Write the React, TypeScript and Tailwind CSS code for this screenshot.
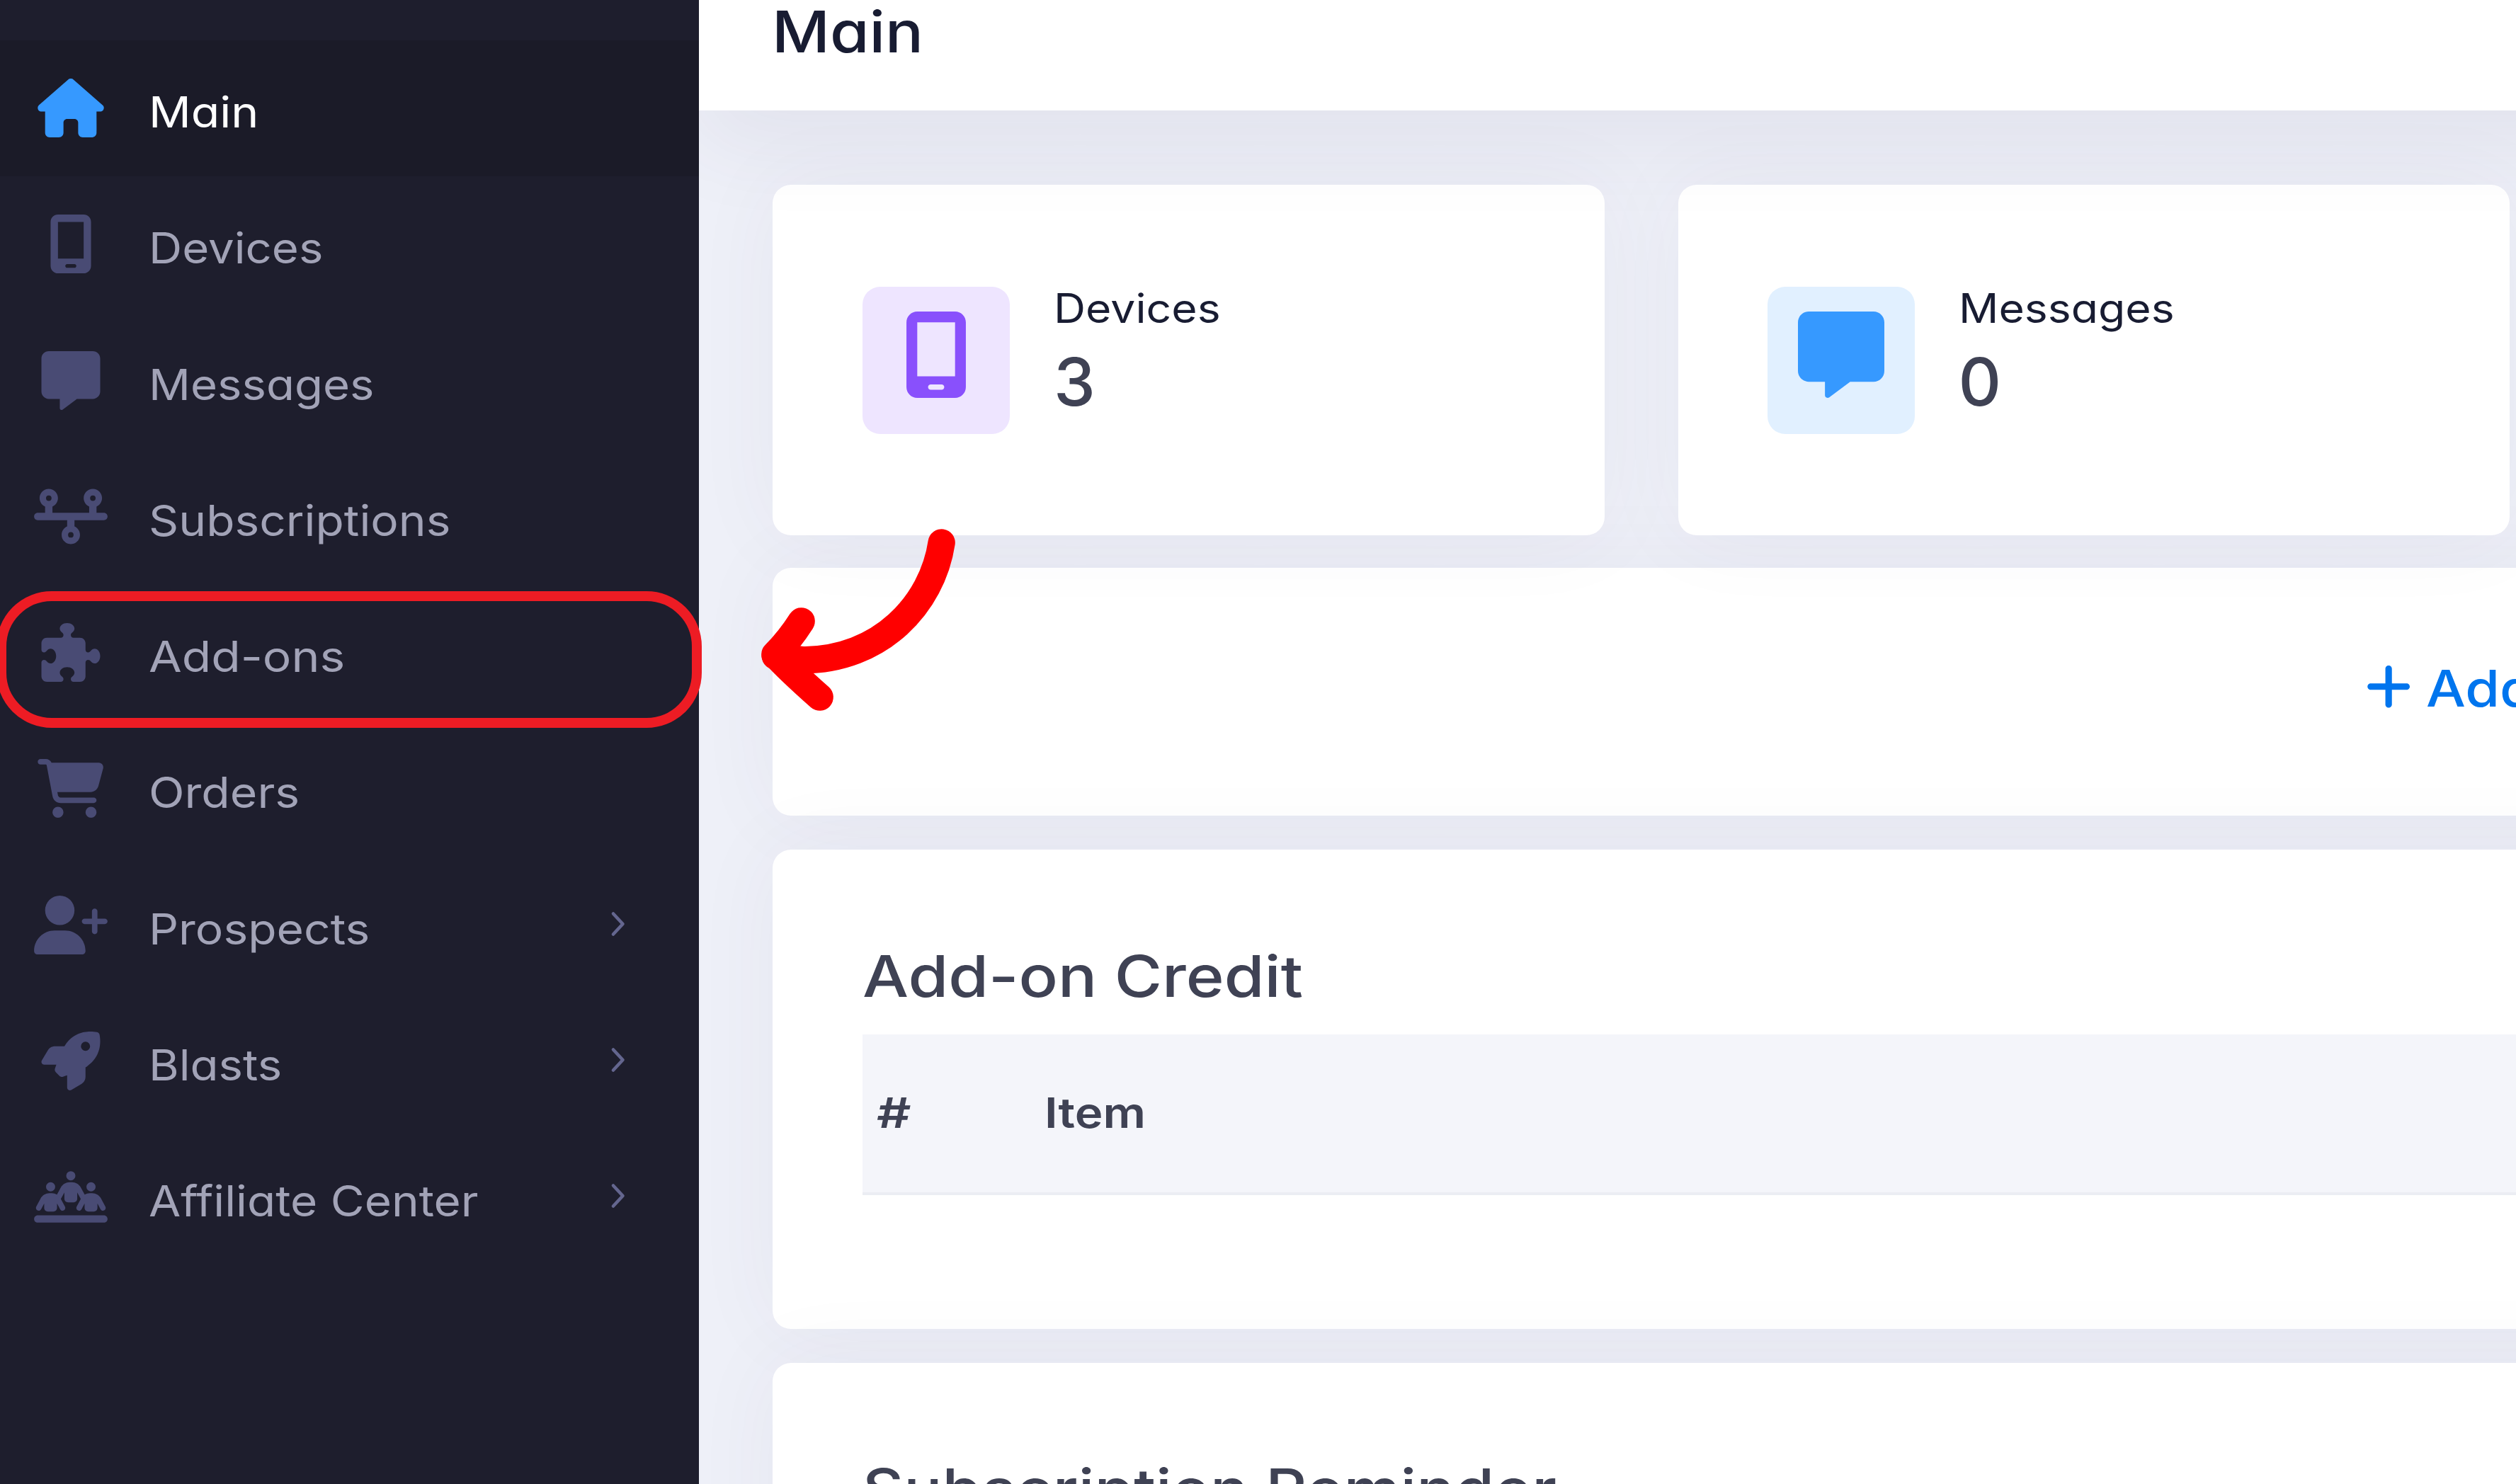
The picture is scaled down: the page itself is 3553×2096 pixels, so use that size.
import React from 'react';
import type { IconType } from 'react-icons';
import {
  FaCartShopping,
  FaHouse,
  FaMessage,
  FaMobileScreen,
  FaPeopleLine,
  FaPlus,
  FaPuzzlePiece,
  FaRocket,
  FaTimeline,
  FaUserPlus,
} from 'react-icons/fa6';
import clsx from 'clsx';

interface NavItem {
  label: string;
  icon: IconType;
  stretch: string;
  active?: boolean;
  hasChildren?: boolean;
}

const navItems: NavItem[] = [
  { label: 'Main', icon: FaHouse, stretch: 'scale-x-[1.103]', active: true },
  { label: 'Devices', icon: FaMobileScreen, stretch: 'scale-x-[1.089]' },
  { label: 'Messages', icon: FaMessage, stretch: 'scale-x-[1.088]' },
  { label: 'Subscriptions', icon: FaTimeline, stretch: 'scale-x-[1.097]' },
  { label: 'Add-ons', icon: FaPuzzlePiece, stretch: 'scale-x-[1.129]' },
  { label: 'Orders', icon: FaCartShopping, stretch: 'scale-x-[1.102]' },
  { label: 'Prospects', icon: FaUserPlus, stretch: 'scale-x-[1.099]', hasChildren: true },
  { label: 'Blasts', icon: FaRocket, stretch: 'scale-x-[1.089]', hasChildren: true },
  { label: 'Affiliate Center', icon: FaPeopleLine, stretch: 'scale-x-[1.094]', hasChildren: true },
];

const Chevron: React.FC = () => (
  <svg viewBox="0 0 22 38" className="mr-[103px] mb-[3px] ml-auto h-[38px] w-[22px]" fill="none">
    <path
      d="M4 4.5 L17.5 19 L4 33.5"
      stroke="#64668f"
      strokeWidth="4.6"
      strokeLinecap="round"
      strokeLinejoin="round"
    />
  </svg>
);

const Sidebar: React.FC = () => (
  <aside className="h-full w-[987px] shrink-0 bg-[#1e1e2d] pt-[56.5px]">
    <nav>
      {navItems.map(({ label, icon: Icon, stretch, active, hasChildren }) => (
        <a
          key={label}
          className={clsx('flex h-[192.25px] items-center', active && 'bg-[#1b1b28]')}
        >
          <Icon
            className={clsx(
              'ml-12 h-[83px] w-[104px] shrink-0',
              active ? 'text-[#3699ff]' : 'text-[#494b74]',
            )}
          />
          <span
            className={clsx(
              'ml-[58px] origin-left pt-[11px] text-[60px] whitespace-nowrap',
              stretch,
              active ? 'text-white' : 'text-[#a2a3b7]',
            )}
          >
            {label}
          </span>
          {hasChildren && <Chevron />}
        </a>
      ))}
    </nav>
  </aside>
);

interface StatCardProps {
  label: string;
  value: number;
  icon: IconType;
  tileClass: string;
  className: string;
}

const StatCard: React.FC<StatCardProps> = ({ label, value, icon: Icon, tileClass, className }) => (
  <div
    className={clsx(
      'flex h-[495px] w-[1174.5px] shrink-0 items-center rounded-[26px] bg-white shadow-[0_0_125px_0_rgba(82,63,105,0.05)]',
      className,
    )}
  >
    <div
      className={clsx(
        'flex size-[208px] items-center justify-center rounded-[25px] pb-[15px]',
        tileClass,
      )}
    >
      <Icon className="size-[122px]" />
    </div>
    <div className="ml-[62px] pb-[37px]">
      <div className="origin-left scale-x-[1.096] text-[57px] leading-[84px] text-[#181c32]">
        {label}
      </div>
      <div className="mt-[13px] text-[94px] leading-[96px] font-medium text-[#3f4254]">{value}</div>
    </div>
  </div>
);

const Card: React.FC<{ className?: string; children: React.ReactNode }> = ({
  className,
  children,
}) => (
  <section
    className={clsx(
      'w-[2700px] rounded-[26px] bg-white pl-[127px] shadow-[0_0_125px_0_rgba(82,63,105,0.05)]',
      className,
    )}
  >
    {children}
  </section>
);

/* Red box and curved arrow pointing at the Add-ons entry */
const Callout: React.FC = () => (
  <>
    <div className="absolute top-[835px] left-[-5px] h-[193px] w-[996px] rounded-[78px] border-[14.5px] border-[#ed1c24]" />
    <svg
      viewBox="0 0 900 860"
      className="absolute top-[740px] left-[1060px] h-[286.67px] w-[300px]"
      fill="none"
      stroke="#ff0000"
      strokeWidth="115"
      strokeLinecap="round"
      strokeLinejoin="round"
    >
      <path d="M809 79 C770 340 550 577 220 577 L104 560" />
      <path d="M215 412 Q164 492 103 553 Q158 614 293 734" />
    </svg>
  </>
);

export default function App() {
  return (
    <div className="relative flex h-[2096px] w-[3553px] overflow-hidden bg-[#eef0f8] font-['Inter',sans-serif] [font-feature-settings:'cv11']">
      <Sidebar />
      <div className="min-w-0 flex-1 overflow-hidden">
        <header className="relative z-10 h-[156px] w-[2900px] bg-white pl-[103px] shadow-[0_42px_125px_0_rgba(82,63,105,0.08)]">
          <h1 className="origin-left scale-x-[1.108] text-[81px] leading-[91px] font-medium text-[#181c32]">
            Main
          </h1>
        </header>

        <main className="pt-[105px] pl-[104px]">
          <div className="flex gap-[104px]">
            <StatCard
              label="Devices"
              value={3}
              icon={FaMobileScreen}
              tileClass="bg-[#eee5ff] text-[#8950fc]"
              className="pl-[127px]"
            />
            <StatCard
              label="Messages"
              value={0}
              icon={FaMessage}
              tileClass="bg-[#e1f0ff] text-[#3699ff]"
              className="pl-[126px]"
            />
          </div>

          <Card className="mt-[46px] flex h-[350px] items-center">
            <a className="ml-[2123px] flex items-center text-[#0075ee]">
              <FaPlus className="mb-[14px] h-[73.5px] w-[64.3px]" />
              <span className="mb-[10px] ml-[21px] origin-left scale-x-[1.11] text-[71px] font-medium whitespace-nowrap">
                Add
              </span>
            </a>
          </Card>

          <Card className="mt-12 h-[677px] pt-[129px]">
            <h3 className="origin-left scale-x-[1.134] text-[81px] leading-[100px] font-medium text-[#3f4254]">
              Add-on Credit
            </h3>
            <table className="mt-8 w-full border-collapse text-left text-[59px] text-[#3f4254]">
              <thead>
                <tr className="h-[225px] border-b-4 border-[#ebedf3] bg-[#f4f5fa]">
                  <th className="w-[237px] pl-5 font-semibold">
                    <span className="inline-block origin-left scale-x-[1.28]">#</span>
                  </th>
                  <th className="pl-5 font-semibold">
                    <span className="inline-block origin-left scale-x-[1.14]">Item</span>
                  </th>
                </tr>
              </thead>
            </table>
          </Card>

          <Card className="mt-12 h-[677px] pt-[129px]">
            <h3 className="origin-left scale-x-[1.113] text-[81px] leading-[100px] font-medium text-[#3f4254]">
              Subscription Reminder
            </h3>
          </Card>
        </main>
      </div>
      <Callout />
    </div>
  );
}
